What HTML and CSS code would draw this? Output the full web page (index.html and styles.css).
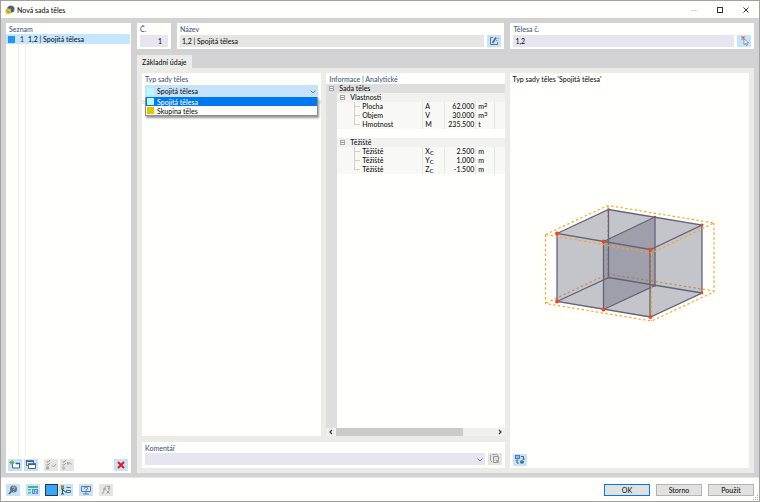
FILE: index.html
```html
<!DOCTYPE html>
<html lang="cs">
<head>
<meta charset="utf-8">
<title>Nová sada těles</title>
<link rel="stylesheet" href="styles.css">
</head>
<body>
<div class="window">
  <header class="titlebar">
    <svg class="app-icon" viewBox="0 0 10 10" aria-hidden="true"><circle cx="6" cy="4" r="3.6" fill="#5a7282"/><path d="M2 3l3-2 4 2-2 5z" fill="#405f76"/><circle cx="3.2" cy="6.4" r="2.8" fill="#e4c62c"/><path d="M1.5 5.5l3 2M5 3l2 2" stroke="#718087"/></svg>
    <h1 class="title">Nová sada těles</h1>
    <div class="window-controls">
      <button class="win-btn" aria-label="Minimalizovat"><svg viewBox="0 0 8 8"><path d="M1 4.5h6" stroke="#d4d4d4"/></svg></button>
      <button class="win-btn" aria-label="Maximalizovat"><svg viewBox="0 0 8 8"><rect x="1.5" y="1.5" width="5" height="5" fill="none" stroke="#333"/></svg></button>
      <button class="win-btn" aria-label="Zavřít"><svg viewBox="0 0 8 8"><path d="M1.5 1.5l5 5M6.5 1.5l-5 5" stroke="#333"/></svg></button>
    </div>
  </header>

  <main class="main">
    <section class="panel list-panel">
      <h2 class="label">Seznam</h2>
      <ul class="set-list">
        <li class="set-item"><span class="swatch blue"></span><span class="set-no">1</span><span class="set-name">1,2 | Spojitá tělesa</span></li>
      </ul>
      <div class="list-space"></div>
      <div class="toolbar list-tools">
        <button class="icon-btn" aria-label="Nová"><svg viewBox="0 0 14 12"><path d="M4.500 4.500v4.500h7v-4.500h-4" fill="#fff" stroke="#53677c"/><path d="M8 4.500h4" stroke="#315c89" stroke-width="1.500"/><path d="M4 1v5M1.500 3.500h5M2 2l4 3M6 2l-4 3" stroke="#63a032" stroke-width=".8"/></svg></button>
        <button class="icon-btn" aria-label="Kopírovat"><svg viewBox="0 0 14 12"><path d="M2.500 2.500h7v4h-7z" fill="#dceaf5" stroke="#526b85"/><path d="M2 2h8" stroke="#315c89" stroke-width="1.500"/><path d="M4.500 5.500h7v4h-7z" fill="#fff" stroke="#526b85"/><path d="M4 5h8" stroke="#315c89" stroke-width="1.500"/></svg></button>
        <button class="icon-btn off gap" aria-label="Vybrat" disabled><svg viewBox="0 0 14 12"><path d="M2.500 2l1 1.500L6 1M2.500 5l1 1.500L6 4M8 6.500l1.500 1.500L12 5" fill="none" stroke="#969696"/><rect x="2.500" y="8" width="2" height="2" fill="none" stroke="#aaa"/></svg></button>
        <button class="icon-btn off" aria-label="Obrátit výběr" disabled><svg viewBox="0 0 14 12"><path d="M2.500 2l1 1.500L6 1M2.500 5l1 1.500L6 4M7.500 5c1-1.500 3-1.500 4 .5M7.500 3v2h2" fill="none" stroke="#a0a0a0"/><rect x="2.500" y="8" width="2" height="2" fill="none" stroke="#bbb"/></svg></button>
        <button class="icon-btn push" aria-label="Smazat"><svg viewBox="0 0 14 12"><path d="M4 3l6 6M10 3l-6 6" stroke="#f11212" stroke-width="1.900"/></svg></button>
      </div>
    </section>

    <div class="editor">
      <div class="top-row">
        <section class="panel field-panel">
          <label class="label" for="no">Č.</label>
          <input class="field number" id="no" value="1">
        </section>
        <section class="panel field-panel">
          <label class="label" for="name">Název</label>
          <div class="field-line">
            <input class="field plain" id="name" value="1,2 | Spojitá tělesa">
            <button class="icon-btn" aria-label="Upravit název"><svg viewBox="0 0 14 12"><path d="M6 2.500H3.500v7h7V7" fill="none" stroke="#617488"/><path d="M5.500 8L9 2.500" stroke="#4f5d68" stroke-width="1.400"/><path d="M9 3.500h3M9 5.500h2" stroke="#879baa" stroke-width=".8"/></svg></button>
          </div>
        </section>
        <section class="panel field-panel">
          <label class="label" for="solids">Tělesa č.</label>
          <div class="field-line">
            <input class="field" id="solids" value="1,2">
            <button class="icon-btn" aria-label="Vybrat tělesa"><svg viewBox="0 0 14 12"><path d="M7 3.500v6l1.500-1 1 2 1-.5-1-2h2z" fill="#fff" stroke="#66717b" stroke-width=".7"/><path d="M4.500 1.500l3 3M7.500 1.500l-3 3" stroke="#ef4d4d" stroke-width="1.200"/></svg></button>
          </div>
        </section>
      </div>

      <nav class="tabs"><button class="tab">Základní údaje</button></nav>

      <div class="tab-body">
        <div class="type-col">
          <section class="panel type-panel">
            <label class="label" for="type">Typ sady těles</label>
            <div class="combo">
              <span class="swatch cyan combo-swatch"></span>
              <select class="combo-select" id="type"><option>Spojitá tělesa</option><option>Skupina těles</option></select>
              <svg class="chevron" viewBox="0 0 8 6"><path d="M1.500 1.500L4 4l2.500-2.500" fill="none" stroke="#69808f"/></svg>
              <ul class="menu">
                <li class="menu-item active"><span class="swatch cyan"></span>Spojitá tělesa</li>
                <li class="menu-item"><span class="swatch gold"></span>Skupina těles</li>
              </ul>
            </div>
          </section>
          <section class="panel"></section>
        </div>

        <section class="panel info-panel">
          <h2 class="label">Informace | Analytické</h2>
          <div class="tree">
            <table class="info">
              <colgroup><col class="c-tree"><col class="c-name"><col class="c-symbol"><col class="c-value"><col class="c-unit"><col></colgroup>
              <tbody>
                <tr class="root"><td class="gutter"><span class="toggle"></span></td><th colspan="5">Sada těles</th></tr>
                <tr class="group"><td class="gutter"></td><th colspan="5"><span class="toggle"></span>Vlastnosti</th></tr>
                <tr class="item"><td class="gutter"></td><td class="leaf">Plocha</td><td>A</td><td class="num">62.000</td><td>m<sup>2</sup></td><td></td></tr>
                <tr class="item"><td class="gutter"></td><td class="leaf">Objem</td><td>V</td><td class="num">30.000</td><td>m<sup>3</sup></td><td></td></tr>
                <tr class="item"><td class="gutter"></td><td class="leaf last">Hmotnost</td><td>M</td><td class="num">235.500</td><td>t</td><td></td></tr>
                <tr class="blank"><td class="gutter"></td><td colspan="5"></td></tr>
                <tr class="group"><td class="gutter"></td><th colspan="5"><span class="toggle"></span>Těžiště</th></tr>
                <tr class="item"><td class="gutter"></td><td class="leaf">Těžiště</td><td>X<sub>C</sub></td><td class="num">2.500</td><td>m</td><td></td></tr>
                <tr class="item"><td class="gutter"></td><td class="leaf">Těžiště</td><td>Y<sub>C</sub></td><td class="num">1.000</td><td>m</td><td></td></tr>
                <tr class="item"><td class="gutter"></td><td class="leaf last">Těžiště</td><td>Z<sub>C</sub></td><td class="num">-1.500</td><td>m</td><td></td></tr>
              </tbody>
            </table>
          </div>
          <div class="scrollbar">
            <svg viewBox="0 0 10 8"><path d="M6 2L4 4l2 2" fill="none" stroke="#444" stroke-width="1.300"/></svg>
            <div class="track"><div class="thumb"></div></div>
            <svg viewBox="0 0 10 8"><path d="M4 2l2 2-2 2" fill="none" stroke="#444" stroke-width="1.300"/></svg>
          </div>
        </section>

        <section class="panel preview">
          <p class="preview-title">Typ sady těles 'Spojitá tělesa'</p>
          <svg class="scene" viewBox="543 203 172 119" role="img" aria-label="Spojitá tělesa">
            <g fill="none" stroke="#ffa126" stroke-width="1.200" stroke-dasharray="2.400 2.400"><path d="M608 204.500V273l-62 29M608 273l106 17"/></g>
            <path d="M557 232.500L608.500 208.500 702 224v68L650.500 316 557 300.500z" fill="#77778a" fill-opacity=".43"/>
            <path d="M603.500 240.500L655 216v68.500l-51.500 24z" fill="#69687a" fill-opacity=".4"/>
            <g fill="none" stroke="#656377" stroke-width="1.300">
              <path d="M608.500 208.500v68L557 300.500M608.500 276.500L702 292M655 216v68.500l-51.500 24"/>
              <path d="M557 232.500L608.500 208.500 702 224 650.500 248.500zM603.500 240.500L655 216M557 232.500v68l93.500 15.500L702 292v-68M650 248.500V316M603.500 240.500v68"/>
            </g>
            <g fill="none" stroke="#ffa126" stroke-width="1.200" stroke-dasharray="2.400 2.400"><path d="M545.500 233.500L608 204.500 714 222 651.500 252z"/><path d="M545.500 233.500v69L651.500 320 714 291v-69M651.500 252v68"/></g>
            <g fill="#9b5359"><circle cx="608.500" cy="208.500" r="1.300"/><circle cx="655" cy="216" r="1.300"/><circle cx="608.500" cy="276.500" r="1.200"/><circle cx="655" cy="284.500" r="1.200"/></g>
            <g fill="#fb4215"><circle cx="557" cy="232.500" r="1.900"/><circle cx="603.500" cy="240.500" r="1.900"/><circle cx="650.500" cy="248.500" r="1.900"/><circle cx="557" cy="300.500" r="1.900"/><circle cx="603.500" cy="308.500" r="1.900"/><circle cx="650.500" cy="316" r="1.900"/></g>
            <g fill="#d84c3c"><circle cx="702" cy="224" r="1.400"/><circle cx="702" cy="292" r="1.400"/></g>
          </svg>
          <button class="icon-btn" aria-label="Nastavení zobrazení"><svg viewBox="0 0 14 12"><rect x="2.500" y="1.500" width="4" height="3" fill="#8bb9ff" stroke="#3e78ed"/><path d="M8 2.500h2.500V5M4 6v3h2" fill="none" stroke="#4d6275"/><path d="M7 7l2-1 2 1v2l-2 1-2-1z" fill="#447eac"/><path d="M9 4.500l1.500 1.500L12 4.500M2.500 7L4 5.500 5.500 7" fill="none" stroke="#4d6275" stroke-width=".8"/></svg></button>
        </section>

        <section class="panel comment-panel">
          <label class="label" for="comment">Komentář</label>
          <div class="field-line">
            <div class="combo comment-combo">
              <select class="combo-select field" id="comment"><option></option></select>
              <svg class="chevron" viewBox="0 0 8 6"><path d="M1.500 1.500L4 4l2.500-2.500" fill="none" stroke="#777783"/></svg>
            </div>
            <button class="icon-btn off" aria-label="Komentáře" disabled><svg viewBox="0 0 14 12"><path d="M2.500 2v5.500L4 9M4 1.500h5l1 1.500" fill="none" stroke="#a4a4a4"/><path d="M5.500 3.500h5v6h-5z" fill="#ddd" stroke="#999"/><path d="M8 7h3v3H8z" fill="#aaa"/></svg></button>
          </div>
        </section>
      </div>
    </div>
  </main>

  <footer class="footer">
    <div class="toolbar">
      <button class="icon-btn" aria-label="Nápověda"><svg viewBox="0 0 14 12"><circle cx="7.500" cy="5" r="3.500" fill="#5f7180"/><path d="M5 7.500L3 10" stroke="#53636f" stroke-width="1.800"/><path d="M6.500 4c0-1.500 2.500-1.500 2.500 0C9 5 7.500 5 7.500 6M7.500 7v.8" fill="none" stroke="#d5e7f3" stroke-width=".8"/></svg></button>
      <button class="icon-btn wide" aria-label="Jednotky"><svg viewBox="0 0 14 12"><path d="M2 2h10v2H2z" fill="#46b879"/><path d="M2 5h3v1.500H2zM2 8h3v1.500H2z" fill="#4eb989"/><path d="M6 5h6v5H6z" fill="#538fe0"/><path d="M7.500 6v3M9 6.500h1.500L9 9h2" stroke="#d8eaff" stroke-width=".7" fill="none"/></svg></button>
      <button class="icon-btn color" aria-label="Barva"></button>
      <button class="icon-btn" aria-label="Zobrazení"><svg viewBox="0 0 14 12"><path d="M2 1.500h3v2H2z" fill="#df493b"/><path d="M2 3.500h3v2H2z" fill="#35a74a"/><path d="M3.500 5v5M3.500 5.500L7 8.500M2 10h3" fill="none" stroke="#34495d"/><path d="M7.500 3.500h4M7.500 6.500h4v2h-4z" fill="#fff" stroke="#476583"/></svg></button>
      <button class="icon-btn wide" aria-label="Náhled"><svg viewBox="0 0 14 12"><path d="M2.500 2.500h9v5h-9zM7 8v2M4 10h6" fill="#cce3f4" stroke="#617f9b"/><path d="M5.500 4.500c0-2 3-2 3 0 0 1-1.500 1-1.500 2" fill="none" stroke="#366898"/></svg></button>
      <button class="icon-btn off wide" aria-label="Vzorec" disabled><svg viewBox="0 0 14 12"><path d="M3 10c2 0 2-8 4.500-8M4 5h3M8 2.500h3L9 5h2.500M7.500 6.500l3 3M10.500 6.500l-3 3" fill="none" stroke="#999"/></svg></button>
    </div>
    <div class="actions">
      <button class="btn primary">OK</button>
      <button class="btn">Storno</button>
      <button class="btn">Použít</button>
    </div>
  </footer>
  <svg class="grip" viewBox="0 0 6 6" aria-hidden="true"><path d="M4 0h1v1H4zM2 2h1v1H2zM4 2h1v1H4zM0 4h1v1H0zM2 4h1v1H2zM4 4h1v1H4z" fill="#aaa"/></svg>
</div>
</body>
</html>
```
FILE: styles.css
```css
* { box-sizing: border-box; }

body {
  margin: 0;
  color: #141414;
  font: 500 7px/10px Lato, "Open Sans", sans-serif;
}

h1, h2, p, ul { margin: 0; padding: 0; font: inherit; }
ul { list-style: none; }
button, input, select { margin: 0; padding: 0; border: 0; border-radius: 0; color: inherit; font: inherit; }
svg { display: block; }

.window {
  position: relative;
  display: flex;
  flex-direction: column;
  min-height: 100vh;
  border: 1px solid #a2a2a2;
  background: #fffffc;
}

.titlebar { display: flex; align-items: center; height: 17px; padding: 0 9px 0 4px; }
.app-icon { width: 10px; height: 10px; margin-right: 2px; }
.title { flex: 1; }
.window-controls { display: flex; gap: 18px; }
.win-btn { width: 8px; height: 8px; background: none; }

.main { display: flex; flex: 1; gap: 6px; padding: 5px 5px 4px; background: #d2d2d4; }
.panel { display: flex; flex-direction: column; background: #fffffc; }
.label { display: block; color: #465782; }

.list-panel { width: 125px; }
.list-panel > .label { padding: 1px 3px 0; }
.set-item { display: flex; align-items: center; height: 10px; margin-right: 1px; background: #c5e6ff; }
.swatch { flex: none; width: 7px; height: 7px; }
.blue { margin-left: 2px; background: #2196f5; }
.cyan { background: #b4fcff; }
.gold { background: #e6c500; }
.set-no { width: 9px; color: #70183c; text-align: right; }
.set-name { margin-left: 4px; }
.list-space { flex: 1; width: 20px; margin-left: 12px; border-left: 1px solid #ededed; background: linear-gradient(#ededed, #ededed) 6px 0 / 1px 100% no-repeat; }

.toolbar { display: flex; align-items: center; gap: 2px; }
.list-tools { padding: 3px 3px 2px 2px; }
.icon-btn { flex: none; width: 14px; height: 12px; background: #c5e4fa; }
.icon-btn svg { width: 14px; height: 12px; }
.off { background: #e5e5e3; }
.gap { margin-left: 4px; }
.push { margin-left: auto; }

.editor { display: flex; flex: 1; flex-direction: column; min-width: 0; }
.top-row { display: grid; grid-template-columns: 34px 328fr 244fr; gap: 6px; }
.field-panel { padding: 1px 3px 2px; }
.field-panel .label { margin-bottom: 1px; }
.field-line { display: flex; gap: 3px; }
.field { width: 100%; min-width: 0; height: 12px; padding: 0 2px; background: #e7e6f0; }
.number { padding-right: 6px; text-align: right; }
.plain { background: #e5e5e3; }

.tabs { display: flex; margin-top: 6px; }
.tab { height: 13px; padding: 0 5px; background: #ebebe8; }

.tab-body {
  display: grid;
  flex: 1;
  grid-template-columns: 179fr 178fr 239fr;
  grid-template-rows: 1fr auto;
  gap: 6px 5px;
  padding: 5px;
  background: #ebebe8;
}

.type-col { display: grid; grid-template-rows: auto 1fr; gap: 4px; }
.type-panel { padding: 1px 3px 3px; }
.type-panel .label { margin-bottom: 1px; }
.combo { position: relative; flex: 1; }
.combo-select { display: block; width: 100%; height: 12px; appearance: none; background: #c5e2f9; }
.type-panel .combo-select { padding-left: 12px; }
.combo-swatch { position: absolute; top: 3px; left: 2px; }
.chevron { position: absolute; top: 4px; right: 1px; width: 8px; height: 6px; }
.menu { position: absolute; z-index: 1; top: 100%; left: 0; right: 0; border: 1px solid #8d8d8d; border-top: 0; background: #fffffc; box-shadow: 1px 2px 2px #999; }
.menu-item { display: flex; align-items: center; gap: 3px; height: 9px; padding-left: 1px; }
.active { background: #0078ee; color: #fff; }

.info-panel > .label, .comment-panel > .label { padding: 1px 3px 0; }
.tree { flex: 1; background: linear-gradient(#dedede, #dedede) 0 0 / 11px 100% no-repeat; }
.info { width: 100%; table-layout: fixed; border-collapse: separate; border-spacing: 0; }
.info td, .info th { height: 9px; padding: 0 2px; font-weight: 500; line-height: 9px; text-align: left; white-space: nowrap; }
.info sup, .info sub { font-size: 6px; line-height: 0; }
.info sup { vertical-align: 2px; }
.info sub { vertical-align: -1px; }
.c-tree { width: 11px; }
.c-name { width: 86px; }
.c-symbol { width: 22px; }
.c-value { width: 31px; }
.c-unit { width: 19px; }
.root th { background: #dedede; }
.group th { background: #f1f1ef; }
.info .item td { background: #f8f9f4; border-right: 1px solid #e5e5e2; }
.info .item td:last-child { border-right: 0; }
.info .item .gutter { border: 0; background: #dedede; }
.info .item .leaf {
  padding-left: 25px;
  background:
    linear-gradient(#d0d0d0, #d0d0d0) 18px 4px / 5px 1px no-repeat,
    linear-gradient(#d0d0d0, #d0d0d0) 17px 0 / 1px 100% no-repeat,
    #f8f9f4;
}
.info .item .last { background-size: 5px 1px, 1px 5px, auto; }
.info .item .num { padding-right: 1px; text-align: right; }
.toggle { display: inline-block; width: 5px; height: 5px; border: 1px solid #a5a5a5; background: linear-gradient(#999, #999) 0 1px / 3px 1px no-repeat #fff; }
.group .toggle { margin: 0 5px 0 1px; }
.info .gutter .toggle { display: block; margin-left: 1px; }

.scrollbar { display: flex; height: 8px; background: #f0f0ef; }
.scrollbar svg { width: 10px; height: 8px; }
.track { flex: 1; }
.thumb { width: 80%; height: 8px; background: #cbcbca; }

.preview { grid-column: 3; grid-row: 1 / 3; justify-content: space-between; padding: 1px 3px 2px; }
.scene { align-self: center; width: 172px; margin-bottom: 12px; }
.comment-panel { grid-column: 1 / 3; padding-bottom: 3px; }
.comment-panel .field-line { padding: 0 3px; }
.comment-combo .field { height: 12px; background: #e7e6f0; }

.footer { display: flex; align-items: center; justify-content: space-between; height: 24px; padding: 0 5px; border-top: 1px solid #e8e8e8; }
.wide { margin-left: 4px; }
.color { width: 13px; margin: 0 -1px 0 3px; border: 1px solid #24384a; background: #3ba5fb; }
.actions { display: flex; gap: 6px; }
.btn { width: 46px; height: 12px; border: 1px solid #b4b4b4; background: #e1e1e0; }
.primary { border-color: #0078ee; }
.grip { position: absolute; right: 0; bottom: 0; width: 6px; height: 6px; }
```
